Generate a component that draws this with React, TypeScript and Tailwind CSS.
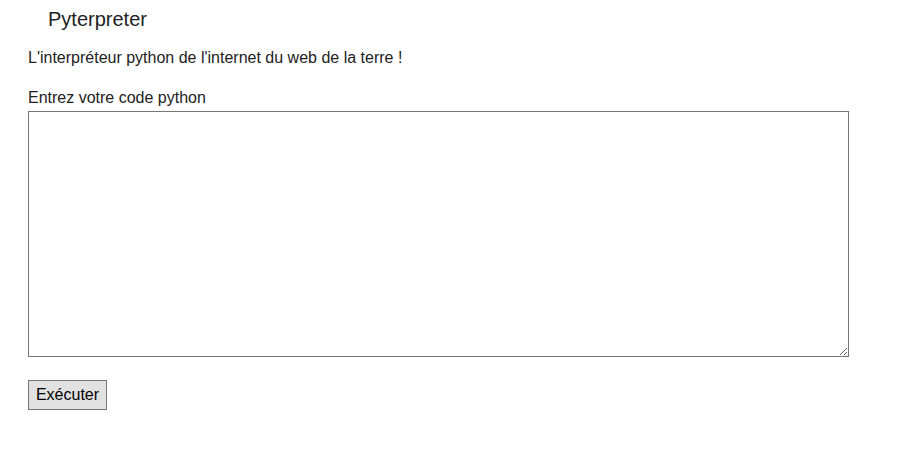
export default function App() {
  return (
    <main
      className="min-h-screen bg-white pl-[28px] text-[#222222]"
      style={{ fontFamily: '"Liberation Sans", Arial, sans-serif' }}
    >
      {/* Heading */}
      <h1 className="pt-[7px] pl-[20px] text-[20px] leading-[24px]">Pyterpreter</h1>

      <p className="mt-[18px] text-[16px] leading-[18px]">
        L'interpréteur python de l'internet du web de la terre !
      </p>

      <label htmlFor="code" className="mt-[22px] block text-[16px] leading-[18px]">
        Entrez votre code python
      </label>
      <textarea
        id="code"
        className="mt-[4px] block h-[246px] w-[821px] border border-[#767676] bg-white outline-none"
      />

      <button className="mt-[23px] h-[30px] w-[79px] border border-[#767676] bg-[#e1e1e1] text-[16px] leading-[18px] text-black">
        Exécuter
      </button>
    </main>
  );
}
